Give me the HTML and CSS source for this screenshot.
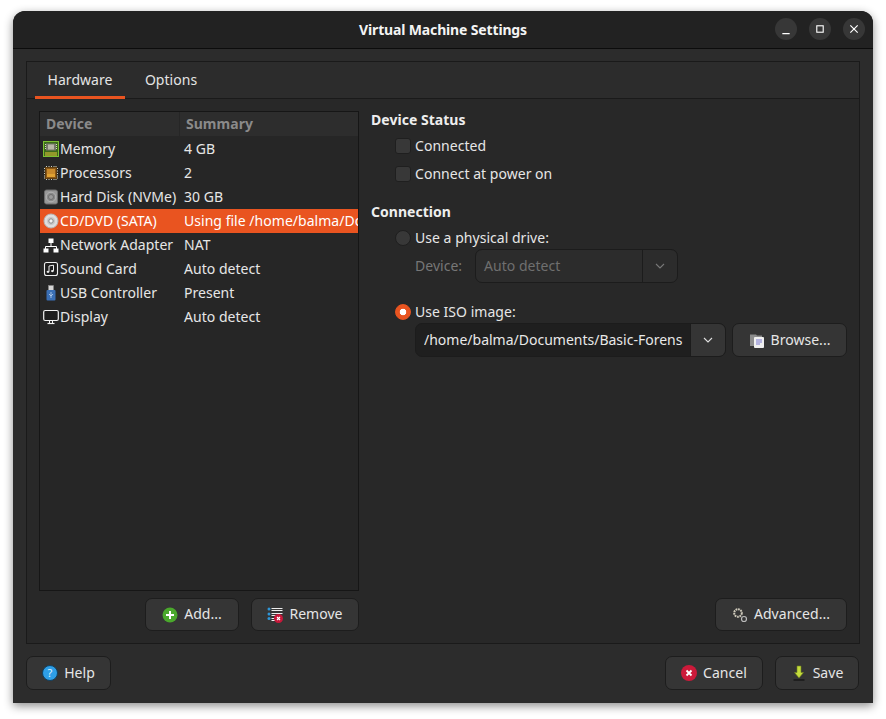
FILE: index.html
```html
<!DOCTYPE html>
<html lang="en">
<head>
<meta charset="utf-8">
<title>Virtual Machine Settings</title>
<link rel="stylesheet" href="styles.css">
</head>
<body>
<div class="window">
  <header class="titlebar">
    <div class="title">Virtual Machine Settings</div>
    <div class="wm">
      <span class="wm-btn"><svg width="24" height="24" viewBox="0 0 24 24"><path d="M8 17h8" stroke="#fff" stroke-width="1.200" fill="none"/></svg></span>
      <span class="wm-btn"><svg width="24" height="24" viewBox="0 0 24 24"><rect x="8.500" y="8.500" width="7" height="7" stroke="#fff" stroke-width="1.200" fill="none"/></svg></span>
      <span class="wm-btn"><svg width="24" height="24" viewBox="0 0 24 24"><path d="M8 8l8 8M16 8l-8 8" stroke="#fff" stroke-width="1.300" fill="none"/></svg></span>
    </div>
  </header>
  <main class="content">
    <section class="notebook">
      <nav class="tabs">
        <div class="tab active">Hardware</div>
        <div class="tab">Options</div>
      </nav>
      <div class="page">
        <div class="left">
          <div class="list">
            <div class="list-head"><div class="col1"><span class="t">Device</span></div><div class="col2"><span class="t">Summary</span></div></div>
            <div class="row">
              <div class="col1"><svg class="ico" viewBox="0 0 16 16"><rect x=".5" y=".5" width="15" height="15" fill="#3c6a1a" stroke="#7cc032"/><rect x="3" y="2.500" width="10" height="7" fill="#77776a"/><rect x="5" y="3.500" width="6" height="5" fill="#b8b8a6"/><path d="M2 3.500h1M2 5.500h1M2 7.500h1M13 3.500h1M13 5.500h1M13 7.500h1" stroke="#d8d8c8"/><path d="M3 11v4M5 11v4M7 11v4M9 11v4M11 11v4M13 11v4" stroke="#e8c83a"/></svg><span class="t">Memory</span></div>
              <div class="col2"><span class="t">4 GB</span></div>
            </div>
            <div class="row">
              <div class="col1"><svg class="ico" viewBox="0 0 16 16"><path d="M3.500 1v14M6 1v14M8.500 1v14M11 1v14M13 1v14M1 3.500h14M1 6h14M1 8.500h14M1 11h14M1 13h14" stroke="#d4d4c4" stroke-width="1"/><rect x="2.500" y="2.500" width="11" height="11" fill="#8a5818" stroke="#5f3d0e"/><rect x="4" y="4" width="8" height="5" fill="#c98a2c"/><rect x="4" y="9" width="8" height="3" fill="#e0a233"/></svg><span class="t">Processors</span></div>
              <div class="col2"><span class="t">2</span></div>
            </div>
            <div class="row">
              <div class="col1"><svg class="ico" viewBox="0 0 16 16"><rect x="1.500" y="1" width="13" height="14" rx="2" fill="#989898" stroke="#6d6d6d"/><circle cx="8" cy="8" r="4.800" fill="#8a8a8a" stroke="#b4b4b4"/><circle cx="8" cy="8" r="2.500" fill="#9c9c9c" stroke="#707070"/></svg><span class="t">Hard Disk (NVMe)</span></div>
              <div class="col2"><span class="t">30 GB</span></div>
            </div>
            <div class="row selected">
              <div class="col1"><svg class="ico" viewBox="0 0 16 16"><circle cx="8" cy="8" r="7" fill="#dedede" stroke="#b5b5b5"/><circle cx="8" cy="8" r="4" fill="#c8c8c8"/><circle cx="8" cy="8" r="2.200" fill="#f4f4f4" stroke="#888"/></svg><span class="t">CD/DVD (SATA)</span></div>
              <div class="col2"><span class="t">Using file /home/balma/Documents/Basic-Forensics.iso</span></div>
            </div>
            <div class="row">
              <div class="col1"><svg class="ico" viewBox="0 0 16 16"><path d="M8 6v3M2.500 12V9.500h11V12" stroke="#fff" stroke-width="1" fill="none"/><rect x="5.500" y="1.500" width="5" height="4.500" fill="#fff"/><rect x=".5" y="11.500" width="5" height="4" fill="#fff"/><rect x="10.500" y="11.500" width="5" height="4" fill="#fff"/></svg><span class="t">Network Adapter</span></div>
              <div class="col2"><span class="t">NAT</span></div>
            </div>
            <div class="row">
              <div class="col1"><svg class="ico" viewBox="0 0 16 16"><rect x="1.500" y="1.500" width="13" height="13" rx="2" fill="#1e1e1e" stroke="#eee" stroke-width="1.100"/><path d="M6 10.500V5l4.500-.8V9.800" stroke="#eee" fill="none"/><ellipse cx="5" cy="10.800" rx="1.400" ry="1.100" fill="#eee"/><ellipse cx="9.400" cy="10.100" rx="1.400" ry="1.100" fill="#eee"/></svg><span class="t">Sound Card</span></div>
              <div class="col2"><span class="t">Auto detect</span></div>
            </div>
            <div class="row">
              <div class="col1"><svg class="ico" viewBox="0 0 16 16"><rect x="5.500" y="0.500" width="5" height="5" fill="#d5d5d5" stroke="#888" stroke-width=".5"/><rect x="3.500" y="5" width="9" height="10.500" rx="1" fill="#3a6fb5"/><path d="M8 7v6M6 9l2 2 2-2" stroke="#bcd4f0" stroke-width=".8" fill="none"/></svg><span class="t">USB Controller</span></div>
              <div class="col2"><span class="t">Present</span></div>
            </div>
            <div class="row">
              <div class="col1"><svg class="ico" viewBox="0 0 16 16"><rect x=".7" y="1.500" width="14.600" height="10" rx="1.500" fill="#1e1e1e" stroke="#f2f2f2" stroke-width="1.200"/><path d="M6.500 12v2M9.500 12v2" stroke="#f2f2f2"/><path d="M4.500 14.500h7" stroke="#f2f2f2" stroke-width="1.200"/></svg><span class="t">Display</span></div>
              <div class="col2"><span class="t">Auto detect</span></div>
            </div>
          </div>
          <div class="actions">
            <button class="btn btn-add"><svg class="ico" viewBox="0 0 16 16"><circle cx="8" cy="8" r="7.500" fill="#4aa82c"/><path d="M8 4v8M4 8h8" stroke="#fff" stroke-width="2"/></svg><span class="t">Add...</span></button>
            <button class="btn btn-remove"><svg class="ico" viewBox="0 0 16 16"><path d="M4.500 1.500h11M4.500 3.500h11M4.500 6.500h11M4.500 8.500h8M4.500 11.500h6M4.500 13.500h5" stroke="#eee"/><circle cx="2" cy="2" r="1.500" fill="#2e96d8"/><circle cx="2" cy="7" r="1.500" fill="#2e96d8"/><circle cx="2" cy="11.500" r="1.500" fill="#2e96d8"/><circle cx="11.500" cy="11.500" r="4.500" fill="#c8183a"/><path d="M10 10l3 3M13 10l-3 3" stroke="#fff" stroke-width="1.100"/></svg><span class="t">Remove</span></button>
          </div>
        </div>
        <div class="right">
          <h2 class="group">Device Status</h2>
          <label class="check first"><span class="box"></span><span class="t">Connected</span></label>
          <label class="check"><span class="box"></span><span class="t">Connect at power on</span></label>
          <h2 class="group second">Connection</h2>
          <label class="check radio-row"><span class="radio"></span><span class="t">Use a physical drive:</span></label>
          <div class="device-row">
            <span class="dim t">Device:</span>
            <div class="combo disabled">
              <div class="combo-value"><span class="t">Auto detect</span></div>
              <div class="combo-arrow"><svg width="12" height="8" viewBox="0 0 12 8"><path d="M2 2l4 4 4-4" stroke="#777" stroke-width="1.100" fill="none"/></svg></div>
            </div>
          </div>
          <label class="check iso-row"><span class="radio on"></span><span class="t">Use ISO image:</span></label>
          <div class="iso-controls">
            <div class="combo iso">
              <div class="combo-value"><span class="t path">/home/balma/Documents/Basic-Forensics.iso</span></div>
              <div class="combo-arrow"><svg width="12" height="8" viewBox="0 0 12 8"><path d="M2 2l4 4 4-4" stroke="#ddd" stroke-width="1.100" fill="none"/></svg></div>
            </div>
            <button class="btn btn-browse"><svg class="ico" viewBox="0 0 16 16"><path d="M1 2.500h6l1 1h5v10.500H1z" fill="#8c8c8c"/><rect x="5" y="5" width="10" height="11" rx="1" fill="#f0f0f0"/><path d="M7 8h6M7 10h6M7 12h4" stroke="#7a78d0"/></svg><span class="t">Browse...</span></button>
          </div>
          <div class="spacer"></div>
          <div class="adv-row">
            <button class="btn btn-adv"><svg class="ico" viewBox="0 0 16 16"><circle cx="6" cy="6" r="3.800" fill="none" stroke="#cfcabb" stroke-width="2" stroke-dasharray="1.800 .7"/><circle cx="12" cy="12" r="2.500" fill="none" stroke="#bbb" stroke-width="1.200"/></svg><span class="t">Advanced...</span></button>
          </div>
        </div>
      </div>
    </section>
    <footer class="footer">
      <button class="btn btn-help"><svg class="ico" viewBox="0 0 16 16"><circle cx="8" cy="8" r="7.500" fill="#2e9ee6" stroke="#12405f"/><text x="8" y="12" class="help-q">?</text></svg><span class="t">Help</span></button>
      <div class="footer-right">
        <button class="btn btn-cancel"><svg class="ico" viewBox="0 0 16 16"><circle cx="8" cy="8" r="8" fill="#cc1a3a"/><path d="M5.500 5.500l5 5M10.500 5.500l-5 5" stroke="#fff" stroke-width="1.800"/></svg><span class="t">Cancel</span></button>
        <button class="btn btn-save"><svg class="ico" viewBox="0 0 16 16"><path d="M6 1h4v6.500h2.500L8 13 3.500 7.500H6z" fill="#c4dc3c" stroke="#6f7f1c" stroke-width=".6"/><path d="M2.500 15h11" stroke="#111" stroke-width="1.200"/></svg><span class="t">Save</span></button>
      </div>
    </footer>
  </main>
</div>
</body>
</html>
```
FILE: styles.css
```css
* { box-sizing: border-box; }
html, body { margin: 0; height: 100%; background: #fff; }
body {
  padding: 11px 13px 16px;
  font-family: "Noto Sans", "DejaVu Sans", sans-serif;
  font-size: 14px;
  letter-spacing: .03px;
  color: #e8e8e8;
  overflow: hidden;
}
.t { padding-bottom: 2px; }
.window {
  width: 860px;
  height: 692px;
  display: flex;
  flex-direction: column;
  background: #2c2c2c;
  border-radius: 12px 12px 0 0;
  box-shadow: 0 3px 10px rgba(0,0,0,.45);
  overflow: hidden;
}
.titlebar {
  height: 38px;
  flex: none;
  position: relative;
  display: flex;
  align-items: center;
  justify-content: center;
  background: #222;
  border-bottom: 1px solid #0c0c0c;
}
.title { font-weight: 700; font-size: 14px; letter-spacing: -.15px; color: #f4f4f4; }
.wm {
  position: absolute;
  right: 8px;
  top: 7px;
  display: flex;
  gap: 12px;
}
.wm-btn {
  width: 22px;
  height: 22px;
  border-radius: 50%;
  background: #373737;
  display: flex;
  align-items: center;
  justify-content: center;
}
.content {
  flex: 1;
  display: flex;
  flex-direction: column;
  padding: 12px 13px 13px;
  min-height: 0;
}
.notebook {
  height: 583px;
  flex: none;
  display: flex;
  flex-direction: column;
  border: 1px solid #1a1a1a;
}
.tabs {
  height: 37px;
  flex: none;
  display: flex;
  padding-left: 8px;
  background: #2c2c2c;
  border-bottom: 1px solid #1a1a1a;
}
.tab {
  width: 90px;
  height: 37px;
  display: flex;
  align-items: center;
  justify-content: center;
  margin-right: 2px;
  color: #e4e4e4;
  padding-bottom: 2px;
}
.tab:nth-child(2) { width: 88px; }
.tab.active { box-shadow: inset 0 -3px 0 #e95420; }
.page {
  flex: 1;
  display: flex;
  background: #282828;
  padding: 12px;
  min-height: 0;
}
.left {
  width: 320px;
  flex: none;
  display: flex;
  flex-direction: column;
}
.list {
  height: 480px;
  flex: none;
  border: 1px solid #161616;
  background: #262626;
  overflow: hidden;
}
.list-head {
  height: 25px;
  display: flex;
  align-items: center;
  background: #2d2d2d;
  border-bottom: 1px solid #262626;
  color: #8a8a8a;
  font-weight: 700;
}
.list-head .col1 { padding-left: 6px; border-right: 1px solid #262626; height: 100%; }
.list-head .col2 { padding-left: 6px; }
.col1 { width: 140px; flex: none; display: flex; align-items: center; white-space: nowrap; }
.col2 { flex: 1; padding-left: 4px; white-space: nowrap; overflow: hidden; min-width: 0; display: flex; align-items: center; }
.row {
  height: 24px;
  display: flex;
  align-items: center;
  color: #e6e6e6;
}
.row .col1 { padding-left: 3px; }
.row .col1 .t { margin-left: 1px; }
.row.selected { background: #e95420; color: #fff; }
.ico { width: 16px; height: 16px; flex: none; display: block; }
.actions {
  display: flex;
  justify-content: flex-end;
  gap: 12px;
  margin-top: 7px;
}
.btn {
  height: 33px;
  display: inline-flex;
  align-items: center;
  justify-content: center;
  gap: 6px;
  border: 1px solid #1d1d1d;
  border-radius: 7px;
  background: #353535;
  color: #e6e6e6;
  font: inherit;
  letter-spacing: inherit;
  padding: 0;
}
.btn-add { width: 94px; }
.btn-remove { width: 108px; }
.right {
  flex: 1;
  min-width: 0;
  display: flex;
  flex-direction: column;
  padding-left: 12px;
}
.group { margin: 0; padding-top: 1px; font-size: 14px; font-weight: 700; color: #eee; line-height: 16px; }
.group.second { margin-top: 20px; padding-top: 0; }
.check { display: flex; align-items: center; height: 20px; padding-left: 24px; margin-top: 8px; color: #e6e6e6; }
.check.first { margin-top: 8px; }
.box {
  width: 16px; height: 16px;
  margin-right: 4px;
  background: #383838;
  border: 1px solid #1f1f1f;
  border-radius: 3px;
  flex: none;
}
.radio {
  width: 16px; height: 16px;
  margin-right: 4px;
  border-radius: 50%;
  background: #383838;
  border: 1px solid #1f1f1f;
  flex: none;
}
.radio.on {
  background: radial-gradient(circle, #fff 0 3px, #e95420 3.6px);
  border-color: #e95420;
}
.device-row {
  display: flex;
  align-items: center;
  padding-left: 44px;
  margin-top: 1px;
  height: 34px;
}
.dim { color: #777; width: 60px; flex: none; }
.combo {
  display: flex;
  height: 34px;
  border: 1px solid #1c1c1c;
  border-radius: 7px;
  overflow: hidden;
}
.combo-value {
  flex: 1;
  min-width: 0;
  display: flex;
  align-items: center;
  white-space: nowrap;
  overflow: hidden;
}
.combo-arrow {
  width: 35px;
  flex: none;
  display: flex;
  align-items: center;
  justify-content: center;
  border-left: 1px solid #1c1c1c;
}
.combo.disabled { width: 203px; color: #6f6f6f; background: #2c2c2c; }
.combo.disabled .combo-value { padding-left: 8px; }
.iso-row { margin-top: 19px; }
.iso-controls {
  display: flex;
  gap: 6px;
  padding-left: 44px;
  margin-top: 1px;
}
.combo.iso { width: 311px; background: #1f1f1f; }
.combo.iso .combo-value { padding-left: 8px; color: #e8e8e8; }
.combo.iso .combo-arrow { background: #353535; }
.path { width: 259px; flex: none; overflow: hidden; letter-spacing: 0; }
.btn-browse { width: 115px; height: 34px; }
.spacer { flex: 1; }
.adv-row { display: flex; justify-content: flex-end; }
.btn-adv { width: 132px; }
.footer {
  flex: 1;
  display: flex;
  justify-content: space-between;
  align-items: flex-end;
}
.footer .btn { height: 34px; }
.footer-right { display: flex; gap: 12px; margin-right: 1px; }
.btn-help { width: 85px; }
.btn-cancel { width: 98px; }
.btn-save { width: 84px; }
.help-q { font-size: 11px; font-weight: 400; fill: #dff0fb; text-anchor: middle; }
```
